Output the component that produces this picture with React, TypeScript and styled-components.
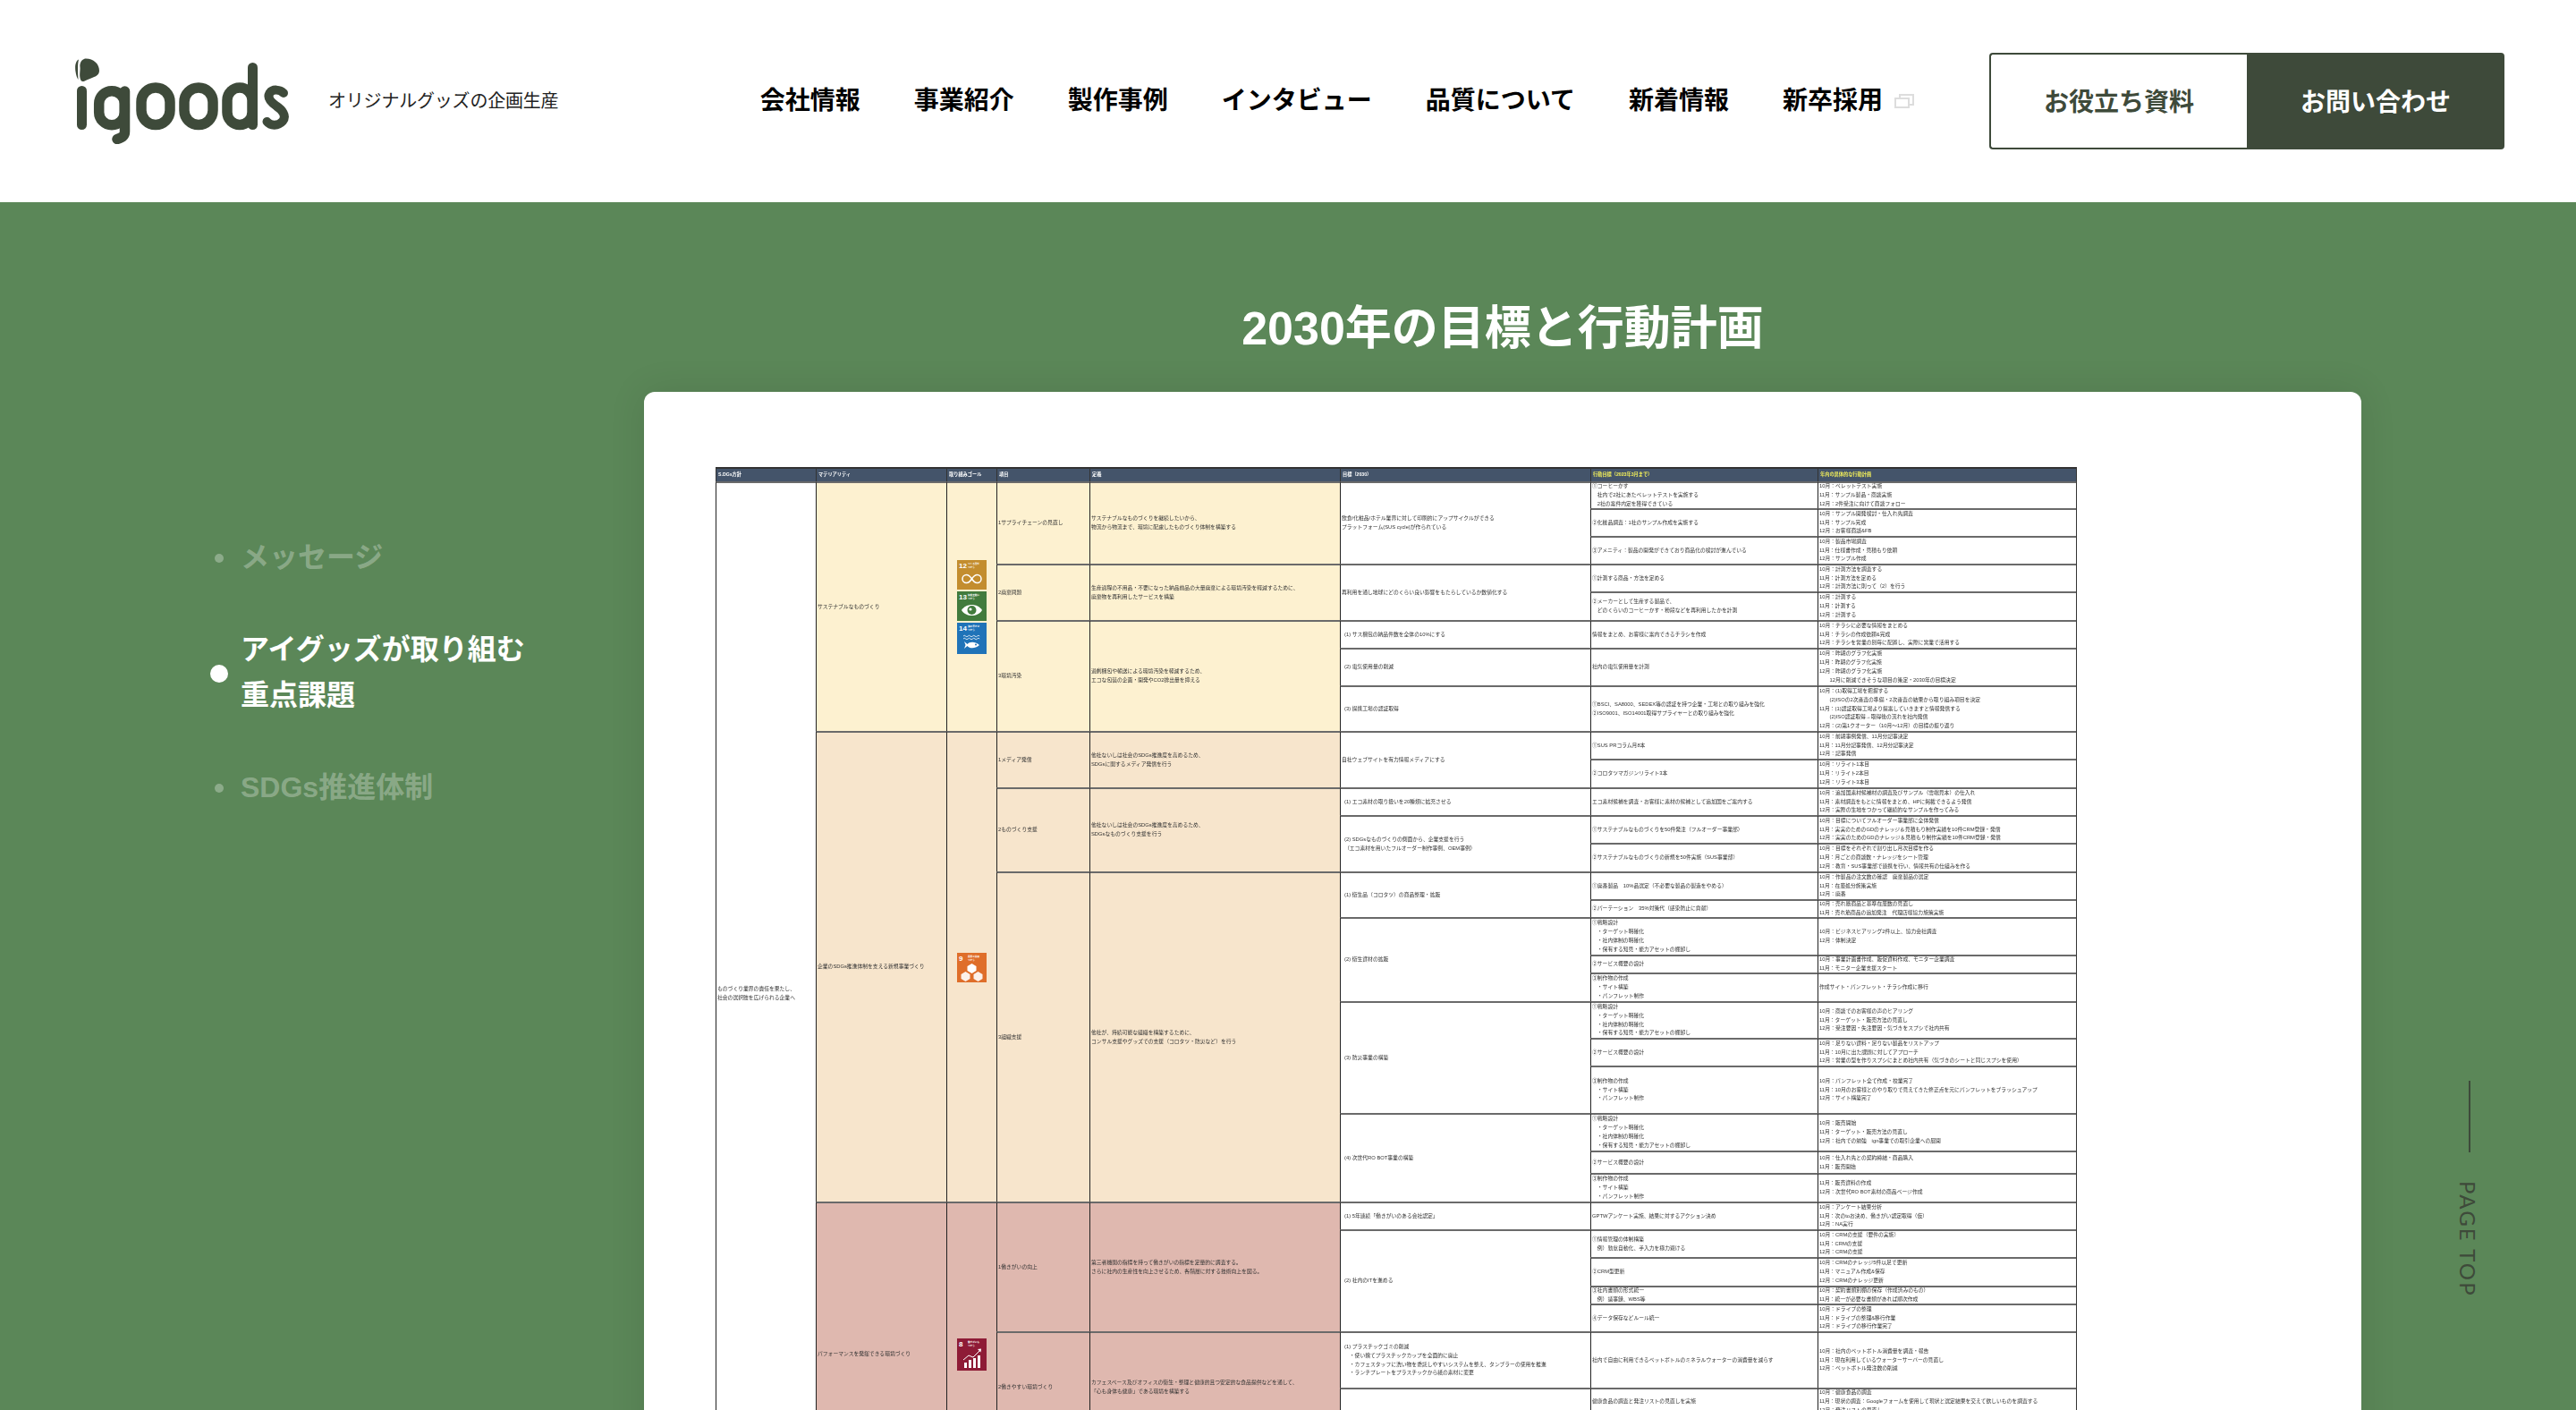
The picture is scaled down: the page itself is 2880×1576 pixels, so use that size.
import styled, { createGlobalStyle } from 'styled-components'

const DARK = '#3e4a3a'
const GREEN = '#5b8758'
const JP = '"Liberation Sans", "Noto Sans CJK JP", "Noto Sans", sans-serif'

const GlobalStyle = createGlobalStyle`
  html, body {
    margin: 0;
    height: 1576px;
    overflow: hidden;
    background: #fff;
    font-family: ${JP};
  }
`

const Page = styled.div`
  height: 1576px;
  overflow: hidden;
  display: flex;
  flex-direction: column;
`

const Header = styled.header`
  flex: none;
  height: 226px;
  background: #fff;
  padding: 0 80px 0 84px;
  display: flex;
  align-items: center;
`

const Brand = styled.div`
  display: flex;
  align-items: center;
  gap: 43px;
`

const LogoSvg = styled.svg`
  width: 240px;
  height: 96px;
  display: block;
`

const Tagline = styled.span`
  font-size: 20px;
  line-height: 30px;
  letter-spacing: -0.2px;
  color: #222;
  padding-bottom: 1px;
`

const Nav = styled.nav`
  margin-left: auto;
  display: flex;
  align-items: center;
  gap: 60px;
`

const NavLink = styled.a`
  display: flex;
  align-items: center;
  gap: 13px;
  font-size: 28px;
  line-height: 40px;
  font-weight: 700;
  color: #000;
`

const ExternalSvg = styled.svg`
  width: 22px;
  height: 16px;
  display: block;
`

const Buttons = styled.div`
  margin-left: 84px;
  display: flex;
  width: 576px;
  height: 108px;
`

const Button = styled.a<{ $filled?: boolean }>`
  flex: none;
  width: 288px;
  display: flex;
  align-items: center;
  justify-content: center;
  box-sizing: border-box;
  padding-bottom: 2px;
  font-size: 28px;
  font-weight: 700;
  border: 2px solid ${DARK};
  border-right-width: ${(p) => (p.$filled ? '2px' : '0')};
  background: ${(p) => (p.$filled ? DARK : '#fff')};
  color: ${(p) => (p.$filled ? '#fff' : DARK)};
  border-radius: ${(p) => (p.$filled ? '0 4px 4px 0' : '4px 0 0 4px')};
`

const Main = styled.main`
  flex: 1;
  position: relative;
  display: flex;
  background: ${GREEN};
`

const Sidebar = styled.ul`
  flex: none;
  box-sizing: border-box;
  width: 720px;
  margin: 0;
  padding: 372px 0 0 235px;
  list-style: none;
  display: flex;
  flex-direction: column;
  gap: 51px;
`

const SideItem = styled.li<{ $active?: boolean }>`
  display: flex;
  align-items: center;
  gap: 14px;
  font-size: 32px;
  line-height: 51px;
  font-weight: 700;
  & > span {
    padding-bottom: 1px;
    color: ${(p) => (p.$active ? '#fff' : 'rgba(255, 255, 255, 0.3)')};
  }
`

const Dot = styled.i<{ $active?: boolean }>`
  flex: none;
  width: 20px;
  height: 20px;
  display: flex;
  align-items: center;
  justify-content: center;
  &::before {
    content: '';
    width: ${(p) => (p.$active ? '20px' : '10px')};
    height: ${(p) => (p.$active ? '20px' : '10px')};
    border-radius: 50%;
    background: ${(p) => (p.$active ? '#fff' : 'rgba(255, 255, 255, 0.3)')};
  }
`

const Content = styled.section`
  flex: none;
  width: 1920px;
  padding-top: 105px;
`

const Title = styled.h2`
  margin: 0 0 35px;
  text-align: center;
  font-size: 52px;
  line-height: 72px;
  font-weight: 700;
  color: #fff;
`

const Card = styled.div`
  height: 1400px;
  box-sizing: border-box;
  padding: 84px 80px 0;
  background: #fff;
  border-radius: 12px;
  box-shadow: 0 0 40px rgba(0, 0, 0, 0.1);
`

const PageTop = styled.a`
  position: absolute;
  top: 982px;
  left: 2746px;
  width: 30px;
  display: flex;
  flex-direction: column;
  align-items: center;
  gap: 32px;
  color: ${DARK};
  &::before {
    content: '';
    width: 2px;
    height: 80px;
    background: ${DARK};
  }
`

const PageTopLabel = styled.span`
  font-family: Lato, sans-serif;
  font-size: 24px;
  line-height: 26px;
  letter-spacing: 2.1px;
  writing-mode: vertical-rl;
  white-space: nowrap;
  margin-right: 4px;
`

const Table = styled.table`
  table-layout: fixed;
  width: 1521px;
  border-collapse: separate;
  border-spacing: 0;
  border-right: 1px solid #333;
  filter: blur(0.35px);
  font-size: 5.8px;
  line-height: 9.8px;
  color: #333;
`

const Col = styled.col<{ $w: number }>`
  width: ${(p) => p.$w}px;
`

const HeadCell = styled.th<{ $accent?: boolean }>`
  box-sizing: border-box;
  height: 16px;
  padding: 0 2px;
  background: #44546a;
  border-top: 2px solid #333;
  border-left: 1px solid #333;
  color: ${(p) => (p.$accent ? '#f4f05a' : '#fff')};
  font-size: 5.2px;
  font-weight: 700;
  text-align: left;
`

const BodyRow = styled.tr<{ $h: number }>`
  height: ${(p) => p.$h}px;
`

const Cell = styled.td<{ $bg?: string; $indent?: boolean }>`
  box-sizing: border-box;
  padding: 0 ${(p) => (p.$indent ? '4px' : '1px')};
  background: ${(p) => p.$bg || '#fff'};
  border-top: 2px solid #6a6a6a;
  border-left: 1px solid #222;
  vertical-align: middle;
`

// negative margins keep the tall lines of the sheet from pushing the row heights
const CellText = styled.span`
  display: block;
  margin: -4px 0;
  white-space: pre;
`

const IconStack = styled.div`
  display: flex;
  flex-direction: column;
  align-items: center;
  gap: 2px;
`

const IconSvg = styled.svg<{ $h: number }>`
  width: 33px;
  height: ${(p) => p.$h}px;
  display: block;
`

const IconLabel = styled.text`
  font-size: 2.6px;
  font-weight: 700;
  fill: #fff;
`

const IconNumber = styled.text`
  font-family: "Liberation Sans", sans-serif;
  font-size: 8px;
  font-weight: 700;
  fill: #fff;
`

type Step = { h: number; action: string; plan: string }
type Target = { text: string; indent?: boolean; steps: Step[] }
type Item = { label: string; def: string; targets: Target[] }
type Material = { name: string; color: string; icons: number[]; items: Item[] }

const STRATEGY = '①戦略設計\n　・ターゲット明確化\n　・社内体制の明確化\n　・保有する知見・能力アセットの棚卸し'
const OUTLINE = '②サービス概要の設計'
const MAKING = '③制作物の作成\n　・サイト構築\n　・パンフレット制作'

const MATERIALS: Material[] = [
  {
    name: 'サステナブルなものづくり',
    color: '#fdf1d0',
    icons: [12, 13, 14],
    items: [
      {
        label: '1サプライチェーンの見直し',
        def: 'サステナブルなものづくりを継続したいから、\n物流から物流まで、環境に配慮したものづくり体制を構築する',
        targets: [
          {
            text: '飲食/化粧品/ホテル業界に対して印刷的にアップサイクルができる\nプラットフォーム(SUS cycle)が作られている',
            steps: [
              { h: 30, action: '①コーヒーかす\n　社内で2社にあたペレットテストを実施する\n　2社の案件内定を獲得できている', plan: '10月：ペレットテスト実施\n11月：サンプル製品・商談実施\n12月：2件受注に向けて商談フォロー' },
              { h: 31, action: '②化粧品調査：1社のサンプル作成を実施する', plan: '10月：サンプル開発検討・仕入れ先調査\n11月：サンプル完成\n12月：お客様商談&FB' },
              { h: 31, action: '③アメニティ：製品の開発ができており商品化の検討が進んでいる', plan: '10月：製品市場調査\n11月：仕様書作成・見積もり依頼\n12月：サンプル作成' },
            ],
          },
        ],
      },
      {
        label: '2廃棄問題',
        def: '生産過程の不用品・不要になった納品前品の大量廃棄による環境汚染を軽減するために、\n廃棄物を再利用したサービスを構築',
        targets: [
          {
            text: '再利用を通し地球にどのくらい良い影響をもたらしているか数値化する',
            steps: [
              { h: 31, action: '①計測する商品・方法を定める', plan: '10月：計測方法を調査する\n11月：計測方法を定める\n12月：計測方法に則って（2）を行う' },
              { h: 32, action: '②メーカーとして生産する製品で、\n　どのくらいのコーヒーかす・粉段などを再利用したかを計測', plan: '10月：計測する\n11月：計測する\n12月：計測する' },
            ],
          },
        ],
      },
      {
        label: '3環境汚染',
        def: '過剰梱包や輸送による環境汚染を軽減するため、\nエコな包装の企画・開発やCO2排出量を抑える',
        targets: [
          {
            text: '(1) サス梱包の納品件数を全体の10%にする',
            indent: true,
            steps: [{ h: 31, action: '情報をまとめ、お客様に案内できるチラシを作成', plan: '10月：チラシに必要な情報をまとめる\n11月：チラシの作成依頼&完成\n12月：チラシを営業の別毎に配置し、実際に営業で活用する' }],
          },
          {
            text: '(2) 電気使用量の削減',
            indent: true,
            steps: [{ h: 42, action: '社内の電気使用量を計測', plan: '10月：昨期のグラフ化実施\n11月：昨期のグラフ化実施\n12月：昨期のグラフ化実施\n　　12月に削減できそうな項目の策定・2030年の目標決定' }],
          },
          {
            text: '(3) 提携工場の認証取得',
            indent: true,
            steps: [{ h: 51, action: '①BSCI、SA8000、SEDEX等の認証を持つ企業・工場との取り組みを強化\n②ISO9001、ISO14001取得サプライヤーとの取り組みを強化', plan: '10月：(1)取得工場を把握する\n　　(2)ISOの2次審査の準備・2次審査の結果から取り組み項目を決定\n11月：(1)認証取得工場より提案していきますと情報発信する\n　　(2)ISO認証取得→取得後の流れを社内発信\n12月：(2)第1クオーター（10月〜12月）の目標の振り返り' }],
          },
        ],
      },
    ],
  },
  {
    name: '企業のSDGs推進体制を支える新規事業づくり',
    color: '#f7e5cc',
    icons: [9],
    items: [
      {
        label: '1メディア発信',
        def: '他社ないしは社会のSDGs推進度を高めるため、\nSDGsに関するメディア発信を行う',
        targets: [
          {
            text: '自社ウェブサイトを有力情報メディアにする',
            steps: [
              { h: 31, action: '①SUS PRコラム月8本', plan: '10月：前期事例発信、11月分記事決定\n11月：11月分記事発信、12月分記事決定\n12月：記事発信' },
              { h: 32, action: '②コロタツマガジンリライト3本', plan: '10月：リライト1本目\n11月：リライト2本目\n12月：リライト3本目' },
            ],
          },
        ],
      },
      {
        label: '2ものづくり支援',
        def: '他社ないしは社会のSDGs推進度を高めるため、\nSDGsなものづくり支援を行う',
        targets: [
          {
            text: '(1) エコ素材の取り扱いを20種類に拡充させる',
            indent: true,
            steps: [{ h: 31, action: 'エコ素材候補を調査・お客様に素材の候補として追加国をご案内する', plan: '10月：追加国素材候補材の調査及びサンプル（雲端見本）の仕入れ\n11月：素材調査をもとに情報をまとめ、HPに掲載できるよう発信\n12月：実際の生地をつかって継続的なサンプルを作ってみる' }],
          },
          {
            text: '(2) SDGsなものづくりの側面から、企業支援を行う\n（エコ素材を用いたフルオーダー制作事例、OEM事例）',
            indent: true,
            steps: [
              { h: 31, action: '①サステナブルなものづくりを50件発注（フルオーダー事業部）', plan: '10月：目標についてフルオーダー事業部に全体発信\n11月：実実のためのGDのナレッジ＆見積もり制作実績を10件CRM登録・発信\n12月：実実のためのGDのナレッジ＆見積もり制作実績を10件CRM登録・発信' },
              { h: 32, action: '②サステナブルなものづくりの新規を50件実施（SUS事業部）', plan: '10月：目標をそれぞれで割り出し月次目標を作る\n11月：月ごとの商談数・ナレッジをシート管理\n12月：教育・SUS事業部で連携を行い、情報共有の仕組みを作る' },
            ],
          },
        ],
      },
      {
        label: '3組織支援',
        def: '他社が、持続可能な組織を構築するために、\nコンサル支援やグッズでの支援（コロタツ・防災など）を行う',
        targets: [
          {
            text: '(1) 衛生品（コロタツ）の商品整理・拡販',
            indent: true,
            steps: [
              { h: 31, action: '①廃番製品　10%品選定（不必要な製品の製造をやめる）', plan: '10月：作製品の注文数の確認　廃棄製品の選定\n11月：在庫処分施策実施\n12月：廃番' },
              { h: 20, action: '②パーテーション　35%対策代（感染防止に貢献）', plan: '10月：売れ筋商品と基準在庫数の見直し\n11月：売れ筋商品の追加発注　代理店様協力施策実施' },
            ],
          },
          {
            text: '(2) 衛生資材の拡販',
            indent: true,
            steps: [
              { h: 42, action: STRATEGY, plan: '10月：ビジネスヒアリング2件以上、協力会社調査\n12月：体制決定' },
              { h: 20, action: OUTLINE, plan: '10月：事業計画書作成、販促資料作成、モニター企業調査\n11月：モニター企業支援スタート' },
              { h: 32, action: MAKING, plan: '作成サイト・パンフレット・チラシ作成に移行' },
            ],
          },
          {
            text: '(3) 防災事業の構築',
            indent: true,
            steps: [
              { h: 41, action: STRATEGY, plan: '10月：商談でのお客様の声のヒアリング\n11月：ターゲット・販売方法の見直し\n12月：受注要因・失注要因・気づきをスプシで社内共有' },
              { h: 31, action: OUTLINE, plan: '10月：足りない資料・足りない製品をリストアップ\n11月：10月に出た課題に対してアプローチ\n12月：営業の型を作りスプシにまとめ社内共有（気づきのシートと同じスプシを使用）' },
              { h: 53, action: MAKING, plan: '10月：パンフレット全て作成・校業完了\n11月：10月のお客様とのやり取りで見えてきた修正点を元にパンフレットをブラッシュアップ\n12月：サイト構築完了' },
            ],
          },
          {
            text: '(4) 次世代RO BOT事業の構築',
            indent: true,
            steps: [
              { h: 42, action: STRATEGY, plan: '10月：販売開始\n11月：ターゲット・販売方法の見直し\n12月：社内での勉強　ign事業での取引企業への展開' },
              { h: 25, action: OUTLINE, plan: '10月：仕入れ先との契約締結・商品購入\n11月：販売開始' },
              { h: 32, action: MAKING, plan: '11月：販売資料の作成\n12月：次世代RO BOT素材の商品ページ作成' },
            ],
          },
        ],
      },
    ],
  },
  {
    name: 'パフォーマンスを発揮できる環境づくり',
    color: '#dfb8af',
    icons: [8],
    items: [
      {
        label: '1働きがいの向上',
        def: '第三者機関の指標を持って働きがいの指標を定量的に調査する。\nさらに社内の生産性を向上させるため、各階層に対する技術向上を図る。',
        targets: [
          {
            text: '(1) 5年連続「働きがいのある会社認定」',
            indent: true,
            steps: [{ h: 31, action: 'GPTWアンケート実施、結果に対するアクション決め', plan: '10月：アンケート結果分析\n11月：次のtoお決め、働きがい認定取得（仮）\n12月：NA実行' }],
          },
          {
            text: '(2) 社内のITを進める',
            indent: true,
            steps: [
              { h: 31, action: '①情報管理の体制構築\n　例）勤怠自動化、手入力を極力避ける', plan: '10月：CRMの支援（要件の実施）\n11月：CRMの支援\n12月：CRMの支援' },
              { h: 32, action: '②CRM型更新', plan: '10月：CRMのナレッジ5件以足で更新\n11月：マニュアル作成&保存\n12月：CRMのナレッジ更新' },
              { h: 20, action: '③社内書類の形式統一\n　例）議事録、WBS等', plan: '10月：契約書類別棚の保存（作成済みのもの）\n11月：統一が必要な書類があれば順次作成' },
              { h: 31, action: '④データ保存などルール統一', plan: '10月：ドライブの整理\n11月：ドライブの整理&移行作業\n12月：ドライブの移行作業完了' },
            ],
          },
        ],
      },
      {
        label: '2働きやすい環境づくり',
        def: 'カフェスペース及びオフィスの衛生・整理と健康的且つ安定的な食品提供などを通して、\n「心も身体も健康」である環境を構築する',
        targets: [
          {
            text: '(1) プラスチックゴミの削減\n　・使い捨てプラスチックカップを全面的に廃止\n　・カフェスタッフに洗い物を委託しやすいシステムを整え、タンブラーの使用を推進\n　・ランチプレートをプラスチックから紙の素材に変更',
            indent: true,
            steps: [{ h: 63, action: '社内で自由に利用できるペットボトルのミネラルウォーターの消費量を減らす', plan: '10月：社内のペットボトル消費量を調査・報告\n11月：現在利用しているウォーターサーバーの見直し\n12月：ペットボトル発注数の削減' }],
          },
          {
            text: '(2) 健康的な食品提供を行う',
            indent: true,
            steps: [
              { h: 30, action: '健康食品の調査と発注リストの見直しを実施', plan: '10月：健康食品の調査\n11月：現状の調査：Googleフォームを使用して現状と選定結果を交えて欲しいものを調査する\n12月：発注リストの見直し' },
              { h: 31, action: '', plan: '' },
            ],
          },
        ],
      },
      {
        label: '',
        def: '',
        targets: [{ text: '', steps: [{ h: 70, action: '', plan: '' }] }],
      },
    ],
  },
]

const HEADINGS = ['S.DGs方針', 'マテリアリティ', '取り組みゴール', '項目', '定義', '目標（2030）']
const COLUMNS = [112, 146, 56, 104, 280, 280, 254, 289]

function Logo() {
  return (
    <LogoSvg viewBox="84 64 240 96" aria-label="igoods">
      <g fill={DARK}>
        <path d="M95 64.5C104 64 111 70 111 78C111 84 105 85 98 88C94 90 92 91 90.5 89C88 84 90 78 89.5 74C89 70 90.5 66 95 64.5Z" />
        <path d="M88 65.5C84.5 67 83.5 73 84.5 79C85 83 86 86 87.5 88C87 81 86.5 71 88 65.5Z" />
        <rect x="86" y="95" width="11" height="49" rx="5.5" />
        <rect x="277" y="69" width="11" height="75" rx="5.5" />
      </g>
      <g fill="none" stroke={DARK} strokeWidth="11.5" strokeLinecap="round">
        <rect x="110.7" y="100.7" width="28.6" height="38" rx="14.3" />
        <path d="M139.5 101V146C139.5 151 136.5 153 131 154.5" />
        <rect x="158" y="97" width="32" height="41.5" rx="16" />
        <rect x="206" y="97" width="32" height="41.5" rx="16" />
        <rect x="254" y="97" width="28" height="41.5" rx="14" />
        <path strokeWidth="10" d="M317 103C313 99 305 98 301.5 103C298 109 304 114 309 117.5C315 121.5 321 128 316 134.5C311 140 302.5 140 298.5 135" />
      </g>
    </LogoSvg>
  )
}

function SdgIcon({ goal }: { goal: number }) {
  const tall = goal === 8 ? 36 : goal === 14 ? 35 : 33
  const colors: Record<number, string> = { 12: '#c38d2e', 13: '#417b3d', 14: '#1f73b8', 9: '#df6e2a', 8: '#8e1b36' }
  const labels: Record<number, string> = { 12: 'つくる責任', 13: '気候変動に', 14: '海の豊かさ', 9: '産業と技術', 8: '働きがいも' }
  return (
    <IconSvg $h={tall} viewBox={`0 0 33 ${tall}`}>
      <rect width="33" height={tall} fill={colors[goal]} />
      <IconNumber x="2" y="9">{goal}</IconNumber>
      <IconLabel x="12" y="5">{labels[goal]}</IconLabel>
      <IconLabel x="12" y="8.5">つかう</IconLabel>
      {goal === 12 && (
        <path fill="none" stroke="#fff" strokeWidth="1.5" d="M16.5 21c-2-3-4-4.5-6-4.5a4.5 4.5 0 0 0 0 9c2 0 4-1.5 6-4.5s4-4.5 6-4.5a4.5 4.5 0 0 1 0 9c-2 0-4-1.5-6-4.5z" />
      )}
      {goal === 13 && (
        <g>
          <path fill="#fff" d="M5 21C10 13 23 13 28 21C23 29 10 29 5 21Z" />
          <circle cx="16.5" cy="21" r="5" fill={colors[13]} />
          <circle cx="15" cy="20" r="1.6" fill="#fff" />
        </g>
      )}
      {goal === 14 && (
        <g>
          <path fill="none" stroke="#fff" strokeWidth="0.8" d="M7 15q1.3-1.5 2.6 0t2.6 0 2.6 0 2.6 0 2.6 0 2.6 0 2.6 0M7 18q1.3-1.5 2.6 0t2.6 0 2.6 0 2.6 0 2.6 0 2.6 0 2.6 0" />
          <path fill="#fff" d="M8 21l3.5 3C14 21 20 20.5 25 25C20 29.5 14 29 11.5 26L8 29l1.5-4z" />
          <circle cx="21" cy="24.5" r="1" fill={colors[14]} />
        </g>
      )}
      {goal === 9 && (
        <g fill="#fff">
          <path d="M16.5 12l5 3v5l-5 3-5-3v-5z" />
          <path d="M9.5 21l5 3v5l-5 3-5-3v-5z" opacity="0.9" />
          <path d="M23.5 21l5 3v5l-5 3-5-3v-5z" opacity="0.9" />
        </g>
      )}
      {goal === 8 && (
        <g fill="#fff">
          <rect x="8" y="27" width="3" height="6" />
          <rect x="13" y="24" width="3" height="9" />
          <rect x="18" y="22" width="3" height="11" />
          <rect x="23" y="19" width="3" height="14" />
          <path fill="none" stroke="#fff" strokeWidth="1" d="M7 24L13 19L18 21L26 13" />
          <path d="M27 11.5l-4 .5 3.5 3.5z" />
        </g>
      )}
    </IconSvg>
  )
}

function GoalsTable() {
  const total = MATERIALS.flatMap((m) => m.items).flatMap((i) => i.targets).reduce((n, t) => n + t.steps.length, 0)
  const rows: React.ReactNode[] = []

  MATERIALS.forEach((material, mi) => {
    const materialSpan = material.items.flatMap((i) => i.targets).reduce((n, t) => n + t.steps.length, 0)
    material.items.forEach((item, ii) => {
      const itemSpan = item.targets.reduce((n, t) => n + t.steps.length, 0)
      item.targets.forEach((target, ti) => {
        target.steps.forEach((step, si) => {
          const firstOfTarget = si === 0
          const firstOfItem = ti === 0 && firstOfTarget
          const firstOfMaterial = ii === 0 && firstOfItem
          rows.push(
            <BodyRow $h={step.h} key={`${mi}-${ii}-${ti}-${si}`}>
              {mi === 0 && firstOfMaterial && (
                <Cell rowSpan={total}>
                  <CellText>{'ものづくり業界の責任を果たし、\n社会の選択肢を広げられる企業へ'}</CellText>
                </Cell>
              )}
              {firstOfMaterial && (
                <>
                  <Cell rowSpan={materialSpan} $bg={material.color}>
                    <CellText>{material.name}</CellText>
                  </Cell>
                  <Cell rowSpan={materialSpan} $bg={material.color}>
                    <IconStack>
                      {material.icons.map((g) => (
                        <SdgIcon goal={g} key={g} />
                      ))}
                    </IconStack>
                  </Cell>
                </>
              )}
              {firstOfItem && (
                <>
                  <Cell rowSpan={itemSpan} $bg={material.color}>
                    <CellText>{item.label}</CellText>
                  </Cell>
                  <Cell rowSpan={itemSpan} $bg={material.color}>
                    <CellText>{item.def}</CellText>
                  </Cell>
                </>
              )}
              {firstOfTarget && (
                <Cell rowSpan={target.steps.length} $indent={target.indent}>
                  <CellText>{target.text}</CellText>
                </Cell>
              )}
              <Cell>
                <CellText>{step.action}</CellText>
              </Cell>
              <Cell>
                <CellText>{step.plan}</CellText>
              </Cell>
            </BodyRow>
          )
        })
      })
    })
  })

  return (
    <Table>
      <colgroup>
        {COLUMNS.map((w, i) => (
          <Col $w={w} key={i} />
        ))}
      </colgroup>
      <thead>
        <tr>
          {HEADINGS.map((h) => (
            <HeadCell key={h}>{h}</HeadCell>
          ))}
          <HeadCell $accent>行動目標（2023年3月まで）</HeadCell>
          <HeadCell $accent>年内の具体的な行動計画</HeadCell>
        </tr>
      </thead>
      <tbody>{rows}</tbody>
    </Table>
  )
}

export default function App() {
  const links = ['会社情報', '事業紹介', '製作事例', 'インタビュー', '品質について', '新着情報']
  return (
    <Page>
      <GlobalStyle />
      <Header>
        <Brand>
          <Logo />
          <Tagline>オリジナルグッズの企画生産</Tagline>
        </Brand>
        <Nav>
          {links.map((l) => (
            <NavLink key={l}>{l}</NavLink>
          ))}
          <NavLink>
            新卒採用
            <ExternalSvg viewBox="0 0 22 16">
              <path fill="none" stroke="#ddd" strokeWidth="2" d="M6 4V1H21V12H17" />
              <rect x="1" y="5" width="15" height="10" fill="none" stroke="#ddd" strokeWidth="2" />
            </ExternalSvg>
          </NavLink>
        </Nav>
        <Buttons>
          <Button>お役立ち資料</Button>
          <Button $filled>お問い合わせ</Button>
        </Buttons>
      </Header>
      <Main>
        <Sidebar>
          <SideItem>
            <Dot />
            <span>メッセージ</span>
          </SideItem>
          <SideItem $active>
            <Dot $active />
            <span>
              アイグッズが取り組む
              <br />
              重点課題
            </span>
          </SideItem>
          <SideItem>
            <Dot />
            <span>SDGs推進体制</span>
          </SideItem>
        </Sidebar>
        <Content>
          <Title>2030年の目標と行動計画</Title>
          <Card>
            <GoalsTable />
          </Card>
        </Content>
        <PageTop>
          <PageTopLabel>PAGE TOP</PageTopLabel>
        </PageTop>
      </Main>
    </Page>
  )
}
